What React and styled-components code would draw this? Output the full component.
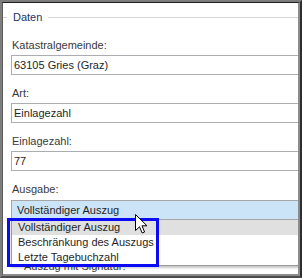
import React from "react";
import styled, { createGlobalStyle } from "styled-components";

const GlobalStyle = createGlobalStyle`
  html, body {
    margin: 0;
    padding: 0;
    background: #ffffff;
  }
  body {
    font-family: "Liberation Sans", Arial, sans-serif;
    font-size: 11px;
  }
`;

// outer window edge
const Frame = styled.div`
  position: relative;
  width: 302px;
  height: 278px;
  box-sizing: border-box;
  border-style: solid;
  border-width: 2px;
  border-color: #7d7d7d #2e2e2e #4c4c4c #7d7d7d;
`;

const Pane = styled.div`
  width: 100%;
  height: 100%;
  box-sizing: border-box;
  border-style: solid;
  border-width: 1px 2px 2px 1px;
  border-color: #1e1e1e #8c8c8c #8c8c8c #5c5c5c;
  background: #ffffff;
  overflow: hidden;
`;

const GroupBox = styled.fieldset`
  margin: 7px -20px 0 -1px;
  padding: 0;
  border: 1px solid #d5d5d5;
  min-width: 0;
`;

const Legend = styled.legend`
  margin-left: 4px;
  padding: 0 6px;
  line-height: 14px;
  color: #22356a;
`;

const Body = styled.div`
  display: flex;
  flex-direction: column;
  gap: 11px;
  padding: 14px 0 0 8px;
`;

const Field = styled.div`
  position: relative;
  display: flex;
  flex-direction: column;
  margin-top: ${(p) => p.$offset || 0}px;
`;

const Label = styled.label`
  display: block;
  margin: 0 0 3px ${(p) => p.$indent || 1}px;
  line-height: 14px;
  color: #3a3a3a;
`;

const TextBox = styled.input`
  display: block;
  width: 100%;
  height: 20px;
  box-sizing: border-box;
  margin: 0;
  padding: 0 2px;
  border: 1px solid #abadb3;
  border-radius: 0;
  background: #ffffff;
  font: inherit;
  color: #1f1f1f;
  outline: none;
`;

const Combo = styled.div`
  position: relative;
  margin-top: 1px;
  height: 20px;
  box-sizing: border-box;
  padding: 0 5px;
  border: 1px solid #a6a6a6;
  background: #cce4f7;
  color: #1f1f1f;
  line-height: 18px;
`;

const DropList = styled.ul`
  position: absolute;
  z-index: 2;
  top: 100%;
  left: -1px;
  right: -1px;
  margin: 0;
  padding: 0;
  list-style: none;
  background: #ffffff;
  border: 1px solid #9a9a9a;
  border-top-color: #a6a6a6;
  box-shadow: 0 2px 2px rgba(0, 0, 0, 0.22);
`;

const Option = styled.li`
  height: 15px;
  padding: 0 6px;
  line-height: 15px;
  color: #1f1f1f;
  background: ${(p) => (p.$active ? "#e0e0e0" : "transparent")};
`;

// blue annotation box drawn over the screenshot
const Marker = styled.div`
  position: absolute;
  z-index: 3;
  left: 5px;
  top: 216px;
  width: 152px;
  height: 49px;
  box-sizing: border-box;
  border: 3px solid #0a0af5;
`;

const Cursor = styled.svg`
  position: absolute;
  z-index: 4;
  left: 133px;
  top: 212px;
`;

const options = [
  "Vollständiger Auszug",
  "Beschränkung des Auszugs",
  "Letzte Tagebuchzahl",
];

const App = () => {
  return (
    <>
      <GlobalStyle />
      <Frame>
        <Pane>
          <GroupBox>
            <Legend>Daten</Legend>
            <Body>
              <Field>
                <Label>Katastralgemeinde:</Label>
                <TextBox readOnly value="63105 Gries (Graz)" />
              </Field>
              <Field>
                <Label>Art:</Label>
                <TextBox readOnly value="Einlagezahl" />
              </Field>
              <Field>
                <Label>Einlagezahl:</Label>
                <TextBox readOnly value="77" />
              </Field>
              <Field>
                <Label>Ausgabe:</Label>
                <Combo>
                  Vollständiger Auszug
                  <DropList>
                    {options.map((o, i) => (
                      <Option key={o} $active={i === 0}>
                        {o}
                      </Option>
                    ))}
                  </DropList>
                </Combo>
              </Field>
              <Field $offset={28}>
                <Label $indent={13}>Auszug mit Signatur:</Label>
              </Field>
            </Body>
          </GroupBox>
        </Pane>
        <Marker />
        <Cursor width="13" height="20" viewBox="0 0 13 20">
          <path
            d="M0.5 0.5 L0.5 16.5 L4.5 12.8 L7.2 19 L9.6 18 L7 11.8 L12 11.8 Z"
            fill="#ffffff"
            stroke="#000000"
            strokeWidth="1"
            strokeLinejoin="miter"
          />
        </Cursor>
      </Frame>
    </>
  );
};

export default App;
